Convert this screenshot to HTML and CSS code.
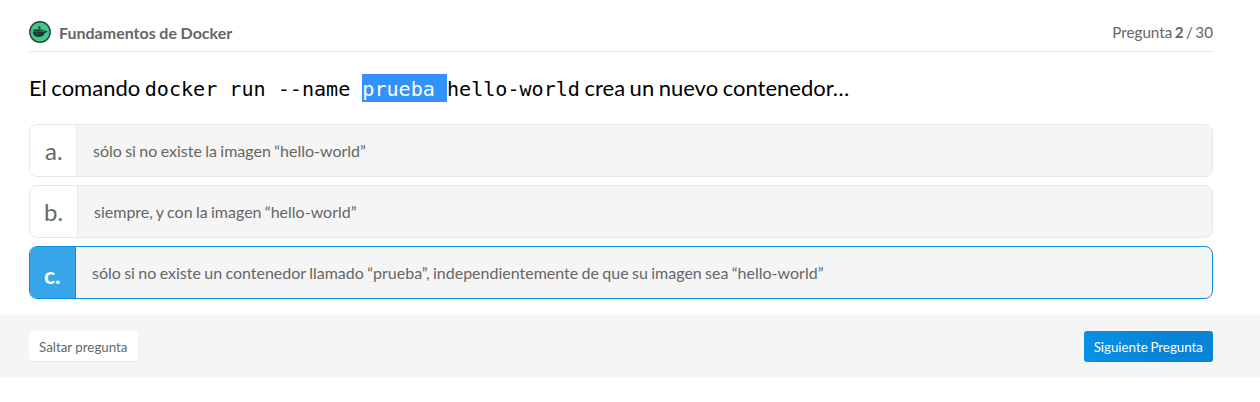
FILE: index.html
```html
<!DOCTYPE html>
<html lang="es">
<head>
<meta charset="utf-8">
<title>Fundamentos de Docker</title>
<link rel="stylesheet" href="styles.css">
</head>
<body>
<main class="exam">
  <header class="exam-header">
    <svg class="badge" viewBox="0 0 22 22" aria-hidden="true">
      <circle cx="11" cy="11" r="10.2" fill="#42c88a" stroke="#25493e" stroke-width="1.5"/>
      <path fill="#173c35" d="M3.8 10.6h11.3c.5-.5.4-1.4 0-2 .9.2 1.4.9 1.5 1.5.7-.1 1.4 0 1.8.3-.4.9-1.2 1.2-2.2 1.2-1.1 3-3.3 4.5-6.6 4.5-3.5 0-5.6-1.7-5.8-5.5zM4.8 8.3h2v1.9h-2zM7.1 8.3h2v1.9h-2zM9.4 8.3h2v1.9h-2zM11.7 8.3h2v1.9h-2zM9.4 5.3h2v2.5h-2z"/>
      <circle cx="8" cy="13" r=".5" fill="#42c88a"/>
    </svg>
    <h1 class="exam-title">Fundamentos de Docker</h1>
    <p class="progress">Pregunta <strong>2</strong> / 30</p>
  </header>
  <h2 class="question">El comando <code>docker run --name <mark>prueba </mark>hello-world</code> crea un nuevo contenedor…</h2>
  <div class="answers">
    <div class="answer"><span class="letter">a.</span><p class="answer-text">sólo si no existe la imagen “hello-world”</p></div>
    <div class="answer answer-b"><span class="letter">b.</span><p class="answer-text">siempre, y con la imagen “hello-world”</p></div>
    <div class="answer selected"><span class="letter">c.</span><p class="answer-text">sólo si no existe un contenedor llamado “prueba”, independientemente de que su imagen sea “hello-world”</p></div>
  </div>
</main>
<footer class="actions">
  <button class="btn skip">Saltar pregunta</button>
  <button class="btn next">Siguiente Pregunta</button>
</footer>
</body>
</html>
```
FILE: styles.css
```css
* { box-sizing: border-box; }
body { margin: 0; background: #fff; color: #666; font-family: Lato, sans-serif; word-spacing: -0.75px; }
h1, h2, p { margin: 0; }
.exam { padding: 13px 47px 16px 29px; }
.exam-header { display: flex; align-items: center; height: 39px; padding-bottom: 1px; border-bottom: 1px solid #e6e6e6; }
.badge { width: 22px; height: 22px; margin-right: 8px; }
.exam-title { font-size: 16px; font-weight: 700; line-height: 24px; padding-top: 2px; word-spacing: -0.25px; }
.progress { margin-left: auto; font-size: 15.2px; line-height: 24px; word-spacing: -1.4px; }
.question { height: 72px; padding-top: 19px; color: #000; font-size: 22px; font-weight: 400; line-height: 33px; white-space: nowrap; word-spacing: -1.1px; }
.question code { font: 20.08px/33px "DejaVu Sans Mono", monospace; word-spacing: 0; }
.question mark { padding: 3px 0 1px; background: #3390ff; color: #fff; }
.answers { display: grid; gap: 8px; }
.answer { display: flex; height: 53px; overflow: hidden; border: 1px solid #e8e8e8; border-radius: 8px; background: #f5f5f5; }
.letter { width: 47px; padding-left: 15px; border-right: 1px solid #e8e8e8; background: #fff; font-size: 24px; line-height: 52px; }
.answer-b .letter { width: 48px; padding-left: 14px; }
.answer-text { padding-left: 16px; font-size: 16px; line-height: 52px; white-space: nowrap; }
.selected { border-color: #0791e6; }
.selected .letter { width: 46px; padding-left: 14px; border-color: #0791e6; background: #37a5ea; color: #fff; font-size: 23px; font-weight: 700; line-height: 56px; }
.actions { display: flex; justify-content: space-between; height: 62px; padding: 16px 47px 0 29px; background: #f5f5f5; }
.btn { height: 31px; padding: 1px 10px 0; border: 0; border-radius: 3px; font: 13.33px/30px Lato, sans-serif; white-space: nowrap; word-spacing: -0.75px; }
.skip { height: 30px; background: #fff; color: #666; box-shadow: 0 1px 1px #e5e5e5; word-spacing: 0; }
.next { background: linear-gradient(90deg, #0791e6, #0784d6 60%); color: #fff; }
```
